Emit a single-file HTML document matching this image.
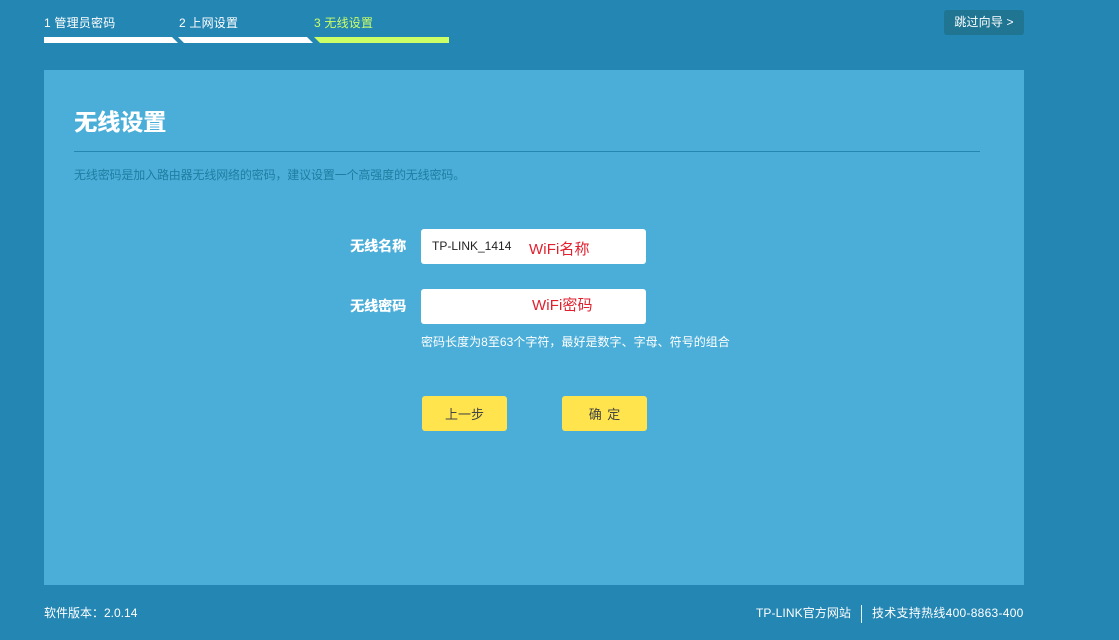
<!DOCTYPE html>
<html lang="zh-CN">
<head>
<meta charset="utf-8">
<title>无线设置</title>
<style>
html,body{margin:0;padding:0}
body{width:1119px;height:640px;overflow:hidden;position:relative;background:#2386b3;font-family:"Liberation Sans","Noto Sans CJK SC",sans-serif;font-size:12px;color:#fff}
.t{position:absolute;white-space:nowrap;line-height:16px}
.panel{position:absolute;left:44px;top:70px;width:980px;height:515px;background:#4aaed9}
.line{position:absolute;left:74px;top:151px;width:906px;height:1px;background:#2386b3}
.input{position:absolute;left:421px;width:225px;height:35px;background:#fff;border-radius:3px}
.btn{position:absolute;top:396px;width:85px;height:35px;background:#ffe44d;border-radius:3px;color:#444;text-align:center;line-height:37px;font-size:13px}
.skip{position:absolute;left:944px;top:10px;width:80px;height:25px;background:#1f7592;border-radius:3px;line-height:25px;text-align:center;font-size:12px;letter-spacing:.15px}
.red{color:#e0202e;font-size:15px;line-height:20px;letter-spacing:.1px}
.sep{position:absolute;left:861px;top:605px;width:1px;height:18px;background:#e4f3fa}
.b{text-shadow:.4px 0 0 #fff}
</style>
</head>
<body>
<div class="t" style="left:44px;top:15px;letter-spacing:.2px">1 管理员密码</div>
<div class="t" style="left:179px;top:15px;letter-spacing:.2px">2 上网设置</div>
<div class="t" style="left:314px;top:15px;letter-spacing:.2px;color:#ccff66">3 无线设置</div>
<svg style="position:absolute;left:0;top:0" width="460" height="50">
<polygon points="44,37 172,37 178,43 44,43" fill="#fff"/>
<polygon points="178,37 307,37 313,43 184,43" fill="#fff"/>
<polygon points="314,37 449,37 449,43 320,43" fill="#ccff66"/>
</svg>
<div class="skip">跳过向导 &gt;</div>
<div class="panel"></div>
<div class="t b" style="left:74px;top:107px;font-size:23px;line-height:30px;font-weight:bold;text-shadow:.5px 0 0 #fff">无线设置</div>
<div class="line"></div>
<div class="t" style="left:74px;top:167px;color:#1f7d9f;letter-spacing:-.15px">无线密码是加入路由器无线网络的密码，建议设置一个高强度的无线密码。</div>
<div class="t b" style="left:350px;top:238px;font-size:14px;font-weight:bold">无线名称</div>
<div class="input" style="top:229px"></div>
<div class="t" style="left:432px;top:238px;color:#222">TP-LINK_1414</div>
<div class="t red" style="left:529px;top:240px">WiFi名称</div>
<div class="t b" style="left:350px;top:298px;font-size:14px;font-weight:bold">无线密码</div>
<div class="input" style="top:289px"></div>
<div class="t red" style="left:532px;top:296px">WiFi密码</div>
<div class="t" style="left:421px;top:334px;letter-spacing:.03px">密码长度为8至63个字符，最好是数字、字母、符号的组合</div>
<div class="btn" style="left:422px">上一步</div>
<div class="btn" style="left:562px;font-size:13px;word-spacing:2px">确 定</div>
<div class="t" style="left:44px;top:605px;font-size:12px">软件版本：2.0.14</div>
<div class="t" style="left:756px;top:605px;letter-spacing:.1px">TP-LINK官方网站</div>
<div class="sep"></div>
<div class="t" style="left:872px;top:605px;letter-spacing:.27px">技术支持热线400-8863-400</div>
</body>
</html>
